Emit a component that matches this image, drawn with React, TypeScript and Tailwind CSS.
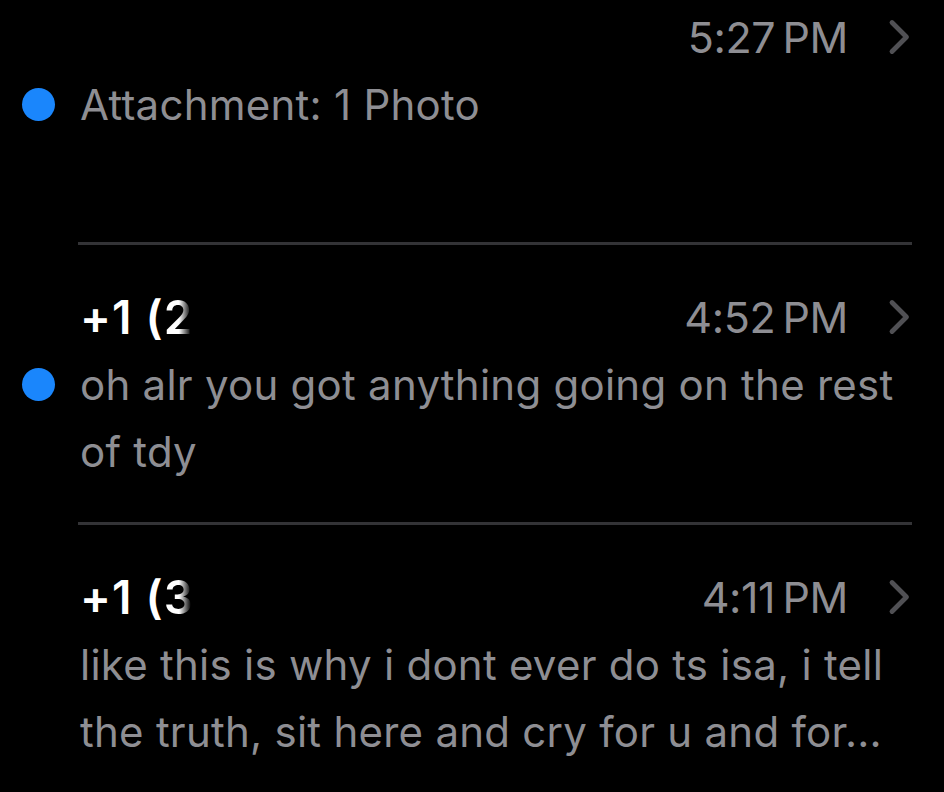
import React from "react";

type Thread = {
  name?: string;
  digit?: string;
  time: string;
  preview: string;
  unread: boolean;
  first?: boolean;
};

const threads: Thread[] = [
  { time: "5:27\u2009PM", preview: "Attachment: 1 Photo", unread: true, first: true },
  { name: "+1 (", digit: "2", time: "4:52\u2009PM", preview: "oh alr you got anything going on the rest of tdy", unread: true },
  {
    name: "+1 (",
    digit: "3",
    time: "4:11\u2009PM",
    preview: "like this is why i dont ever do ts isa, i tell the truth, sit here and cry for u and for...",
    unread: false,
  },
];

function Chevron() {
  return (
    <svg width="26" height="36" viewBox="0 0 26 36" fill="none" className="shrink-0">
      <path d="M6 3.5 L20.5 18 L6 32.5" stroke="#505054" strokeWidth="4.8" strokeLinecap="round" strokeLinejoin="round" />
    </svg>
  );
}

function Row({ t }: { t: Thread }) {
  return (
    <div className="flex">
      {/* unread indicator gutter */}
      <div className="w-[78px] shrink-0 flex flex-col">
        <div className={t.first ? "h-[71px]" : "h-[106px]"} />
        <div className="h-[67px] flex items-center pl-[22px]">
          {t.unread && <div className="w-[33px] h-[33px] rounded-full bg-[#1a86fc]" />}
        </div>
      </div>
      <div className="flex-1 mr-[32px] flex flex-col">
        <div className={t.first ? "pt-[3px]" : "pt-[38px]"}>
          <div className="h-[68px] flex items-center justify-between pl-[2px]">
            <div className="text-[46px] font-semibold text-white tracking-[0.025em] leading-none flex items-center">
              {t.name && <span className="whitespace-pre">{t.name}</span>}
              {t.digit && (
                <span className="bg-gradient-to-r from-white from-50% to-transparent to-90% bg-clip-text text-transparent">
                  {t.digit}
                </span>
              )}
            </div>
            <div className="flex items-center gap-[38px]">
              <span className="text-[43px] text-[#8e8e93] tracking-[-0.01em] leading-none">{t.time}</span>
              <Chevron />
            </div>
          </div>
          <p className="h-[134px] pl-[2px] -mr-[4px] text-[42px] leading-[67px] text-[#8e8e93] tracking-[0.006em] line-clamp-2">
            {t.preview}
          </p>
        </div>
        <div className="pb-[37px]" />
        <div className="h-[3px] bg-[#333336]" />
      </div>
    </div>
  );
}

export default function App() {
  return (
    <div
      className="w-[944px] h-[792px] bg-black overflow-hidden"
      style={{ fontFamily: "Inter, 'Noto Sans', sans-serif" }}
    >
      {threads.map((t, i) => (
        <Row key={i} t={t} />
      ))}
    </div>
  );
}
